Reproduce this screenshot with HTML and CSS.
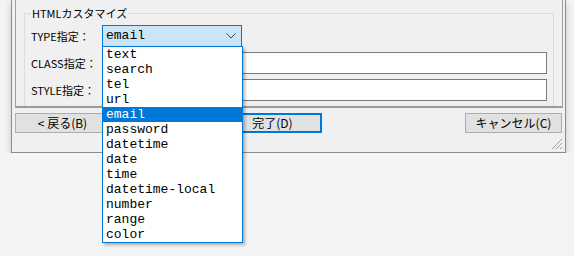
FILE: index.html
```html
<!DOCTYPE html>
<html lang="ja">
<head>
  <meta charset="UTF-8">
  <title>HTMLカスタマイズ</title>
  <link rel="stylesheet" href="styles.css">
</head>
<body>
  <div class="window">
    <div class="page">
      <fieldset class="group">
        <legend>HTMLカスタマイズ</legend>
        <div class="row">
          <span class="label">TYPE指定：</span>
          <div class="select">
            <span class="select-value">email</span>
            <svg class="chevron" width="10" height="6" viewBox="0 0 10 6">
              <polyline points="0.5,0.5 5,5 9.5,0.5" fill="none" stroke="#444" stroke-width="1"/>
            </svg>
          </div>
        </div>
        <div class="row">
          <span class="label">CLASS指定：</span>
          <input class="field" type="text">
        </div>
        <div class="row">
          <span class="label">STYLE指定：</span>
          <input class="field" type="text">
        </div>
      </fieldset>
    </div>

    <div class="buttons">
      <button class="btn back">&lt; 戻る(B)</button>
      <button class="btn finish">完了(D)</button>
      <span class="spacer"></span>
      <button class="btn cancel">キャンセル(C)</button>
    </div>

    <svg class="grip" width="12" height="12" viewBox="0 0 12 12">
      <line x1="11" y1="1" x2="1" y2="11" stroke="#a0a0a0"/>
      <line x1="11" y1="5" x2="5" y2="11" stroke="#a0a0a0"/>
      <line x1="11" y1="9" x2="9" y2="11" stroke="#a0a0a0"/>
    </svg>
  </div>

  <ul class="dropdown">
    <li>text</li>
    <li>search</li>
    <li>tel</li>
    <li>url</li>
    <li class="selected">email</li>
    <li>password</li>
    <li>datetime</li>
    <li>date</li>
    <li>time</li>
    <li>datetime-local</li>
    <li>number</li>
    <li>range</li>
    <li>color</li>
  </ul>
</body>
</html>
```

FILE: styles.css
```css
body {
  margin: 0;
  background-color: #f4f4f4;
  font-family: "Noto Sans CJK JP", "Liberation Sans", sans-serif;
  font-size: 11px;
  color: #000;
}

.window {
  position: relative;
  margin-left: 11px;
  width: 553px;
  height: 152px;
  background-color: #f0f0f0;
  border: 1px solid #8c8c8c;
  border-top: none;
  box-shadow: 0 3px 8px rgba(0, 0, 0, 0.18);
}

.page {
  margin-left: 3px;
  width: 546px;
  height: 106px;
  border: 1px solid #a0a0a0;
  border-top: none;
  border-bottom: 2px solid #9a9a9a;
  overflow: hidden;
}

.group {
  margin: 6px 8px 0 8px;
  padding: 2px 6px 20px 6px;
  border: 1px solid #dcdcdc;
  height: 120px;
}

.group legend {
  padding: 0 1px;
  line-height: 14px;
}

.row {
  display: flex;
  align-items: center;
  height: 27px;
}

.label {
  flex-shrink: 0;
  width: 71px;
  white-space: nowrap;
  line-height: 14px;
}

.select {
  box-sizing: border-box;
  width: 140px;
  height: 22px;
  border: 1px solid #0078d7;
  background-color: #cce4f7;
  display: flex;
  align-items: center;
  justify-content: space-between;
  padding: 0 5px 0 3px;
}

.select-value {
  font-family: "Liberation Mono", monospace;
  font-size: 13px;
}

.chevron {
  display: block;
}

.field {
  box-sizing: border-box;
  width: 445px;
  height: 22px;
  margin: 0;
  border: 1px solid #7a7a7a;
  background-color: #fff;
}

.buttons {
  display: flex;
  margin: 5px 3px 0 3px;
}

.btn {
  box-sizing: border-box;
  height: 20px;
  padding: 0;
  background-color: #e1e1e1;
  border: 1px solid #adadad;
  font-family: "Noto Sans CJK JP", "Liberation Mono", monospace;
  font-size: 12px;
  line-height: 16px;
  color: #000;
}

.back {
  width: 95px;
}

.finish {
  width: 99px;
  margin-left: 113px;
  border: 2px solid #0078d7;
}

.spacer {
  flex: 1;
}

.cancel {
  width: 97px;
}

.grip {
  position: absolute;
  right: 2px;
  bottom: 2px;
}

.dropdown {
  position: absolute;
  left: 102px;
  top: 46px;
  width: 139px;
  margin: 0;
  padding: 0;
  list-style: none;
  background-color: #fff;
  border: 1px solid #0078d7;
  box-shadow: 2px 2px 3px rgba(0, 0, 0, 0.3);
  font-family: "Liberation Mono", monospace;
  font-size: 13px;
}

.dropdown li {
  height: 15px;
  line-height: 15px;
  padding-left: 3px;
}

.dropdown .selected {
  background-color: #0078d7;
  color: #fff;
}
```
